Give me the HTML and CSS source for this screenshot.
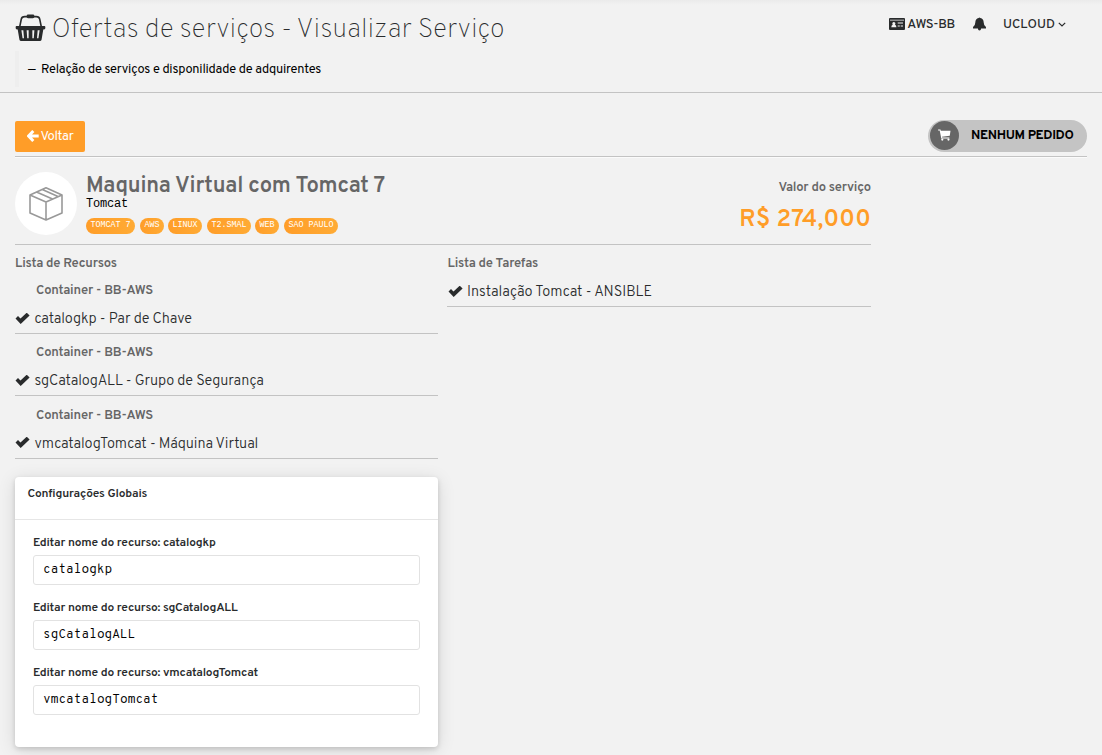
FILE: index.html
```html
<!DOCTYPE html>
<html lang="pt-BR">
<head>
<meta charset="utf-8">
<title>Ofertas de serviços</title>
<link rel="stylesheet" href="styles.css">
</head>
<body>
<svg width="0" height="0" class="defs">
  <symbol id="check" viewBox="0 0 15 11"><path d="M.5 5.6 3 3.1 5.5 5.5 11.7-.3 14.6 2.4 5.7 10.9Z"/></symbol>
</svg>
<header class="page-header">
  <div class="heading">
    <div class="title-row">
      <svg class="basket" viewBox="0 0 32 28"><path d="M5 12 6.5 4.8Q7 2.3 10 2.3H22Q25 2.3 25.5 4.8L27 12" fill="none" stroke="#292b2c" stroke-width="1.7"/><rect x="12" y="0" width="8" height="4" rx="1.5"/><path fill-rule="evenodd" d="M1.5 12H30.5Q31.3 12 31.3 13V14.2Q31.3 15.4 29.2 15.5L27.4 26Q27.2 27.5 25.5 27.5H6.5Q4.8 27.5 4.6 26L2.8 15.5Q.7 15.4.7 14.2V13Q.7 12 1.5 12ZM6.6 16.3 7.8 24.5H9.3L8.6 16.3ZM12 16.3 12.6 24.5H14.1V16.3ZM17.9 16.3V24.5H19.4L20 16.3ZM23.4 16.3 22.7 24.5H24.2L25.4 16.3Z"/></svg>
      <h1 class="title">Ofertas de serviços - Visualizar Serviço</h1>
    </div>
    <p class="subtitle"><span class="dash">—</span><span class="subtitle-text">Relação de serviços e disponilidade de adquirentes</span></p>
  </div>
  <nav class="topnav">
    <span class="nav-item account"><svg class="card-icon" viewBox="0 0 16 12"><path fill-rule="evenodd" d="M1 0H15Q16 0 16 1V11Q16 12 15 12H1Q0 12 0 11V1Q0 0 1 0ZM1 1.7V2.4H15V1.7ZM2.3 9.2H7.4Q7.4 7 5.9 6.8Q6.8 6 6.2 4.7Q4.8 3.2 3.5 4.7Q3 6 3.8 6.8Q2.3 7 2.3 9.2ZM8.7 4.4V5.4H14V4.4ZM8.7 7.5V8.5H10.8V7.5ZM11.7 7.5V8.5H14V7.5Z"/></svg><span class="account-name">AWS-BB</span></span>
    <svg class="bell" viewBox="0 0 12 13"><path d="M5.2.9Q6 0 6.8.9Q9.8 1.5 9.9 5Q10 8.3 12 9.4V10.6H7.5Q7.4 12.4 6 12.5Q4.6 12.4 4.5 10.6H0V9.4Q2 8.3 2.1 5Q2.2 1.5 5.2.9Z"/></svg>
    <span class="nav-item user"><span class="user-name">UCLOUD</span><svg class="chevron" viewBox="0 0 8 5"><path d="M.8.8 4 4 7.2.8"/></svg></span>
  </nav>
</header>
<main class="content">
  <div class="toolbar">
    <button class="back"><svg class="arrow" viewBox="0 0 12 12"><path d="M6.3 1 1.6 6 6.3 11M2.2 6H11.7"/></svg><span class="back-label">Voltar</span></button>
    <div class="cart"><span class="cart-circle"><svg class="cart-icon" viewBox="0 0 14 13"><path d="M0 .5H2.6L3 2H13.5L12.7 7.4 4.2 8.4 4.5 9.2H12.3V10.3H3.5L3.2 8.8 1.8 1.7H0Z"/><circle cx="4.6" cy="11.5" r="1.2"/><circle cx="11.3" cy="11.5" r="1.2"/></svg></span><span class="cart-text">NENHUM PEDIDO</span></div>
  </div>
  <section class="service">
    <div class="summary">
      <div class="avatar"><svg class="box" viewBox="0 0 36 36"><path d="M18 1.7 34 9V27L18 34 2 27V9ZM2 9 18 16 34 9M18 16V34M8.5 6 24.5 13M14.3 3.4 30 10.5"/></svg></div>
      <div class="info">
        <h2 class="name">Maquina Virtual com Tomcat 7</h2>
        <div class="kind">Tomcat</div>
        <div class="tags"><span class="tag t1">TOMCAT 7</span><span class="tag t2">AWS</span><span class="tag t3">LINUX</span><span class="tag t4">T2.SMAL</span><span class="tag t5">WEB</span><span class="tag t6">SAO PAULO</span></div>
      </div>
      <div class="price"><div class="price-label">Valor do serviço</div><div class="amount">R$ 274,000</div></div>
    </div>
    <div class="columns">
      <div class="column">
        <h3 class="list-title resources">Lista de Recursos</h3>
        <div class="resource"><div class="container-name">Container - BB-AWS</div><div class="item"><svg class="check"><use href="#check"/></svg><span class="r1">catalogkp - Par de Chave</span></div></div>
        <div class="resource"><div class="container-name">Container - BB-AWS</div><div class="item"><svg class="check"><use href="#check"/></svg><span class="r2">sgCatalogALL - Grupo de Segurança</span></div></div>
        <div class="resource"><div class="container-name">Container - BB-AWS</div><div class="item"><svg class="check"><use href="#check"/></svg><span class="r3">vmcatalogTomcat - Máquina Virtual</span></div></div>
        <div class="card">
          <div class="card-header">Configurações Globais</div>
          <div class="card-body">
            <label class="field"><span class="label l1">Editar nome do recurso: catalogkp</span><input class="input" value="catalogkp"></label>
            <label class="field"><span class="label l2">Editar nome do recurso: sgCatalogALL</span><input class="input" value="sgCatalogALL"></label>
            <label class="field"><span class="label l3">Editar nome do recurso: vmcatalogTomcat</span><input class="input" value="vmcatalogTomcat"></label>
          </div>
        </div>
      </div>
      <div class="column tasks">
        <h3 class="list-title">Lista de Tarefas</h3>
        <div class="item task"><svg class="check"><use href="#check"/></svg><span class="r4">Instalação Tomcat - ANSIBLE</span></div>
      </div>
    </div>
  </section>
</main>
</body>
</html>
```
FILE: styles.css
```css
* { box-sizing: border-box; }
body { margin: 0; height: 755px; overflow: hidden; background: #f2f2f2 linear-gradient(#ebebeb, #f2f2f2) 0 0 / 100% 5px no-repeat; font-family: Overpass, Roboto, sans-serif; font-size: 13px; color: #292b2c; white-space: nowrap; }
h1, h2, h3, p { margin: 0; }
svg { flex: none; fill: #292b2c; }
.defs { display: block; height: 0; }
.page-header { display: flex; justify-content: space-between; height: 93px; padding: 12px 36px 0 15px; border-bottom: 1px solid #c3c3c3; }
.title-row { display: flex; height: 36px; }
.basket { width: 31px; height: 28px; margin: 2px 6px 0 0; }
.title { padding-top: 2px; margin-left: -.5px; font-size: 27px; line-height: 32px; font-weight: 100; letter-spacing: -.04px; }
.subtitle { display: flex; align-items: center; height: 36px; margin-top: 3px; padding: 2px 0 0 9px; border-left: 4px solid #eeeeee; color: #000; font-size: 12.8px; letter-spacing: -.2px; }
.dash { width: 13px; font-size: 13px; }
.topnav { display: flex; align-items: center; height: 24px; font-size: 13px; font-weight: 500; }
.nav-item { display: flex; align-items: center; }
.account-name { padding-top: 2px; letter-spacing: -.3px; }
.user-name { padding-top: 2px; }
.card-icon { width: 16px; height: 12px; margin-right: 2px; }
.bell { width: 13px; height: 14px; margin: 0 17px 0 18px; }
.chevron { width: 8px; height: 5px; margin-left: 3px; fill: none; stroke: #292b2c; stroke-width: 1.2; }
.content { padding: 27px 15px 0; }
.toolbar { display: flex; justify-content: space-between; height: 37px; border-bottom: 1px solid #c3c3c3; box-shadow: 0 1px #fbfbfb; }
.back { display: flex; align-items: center; width: 70px; height: 31px; margin-top: 1px; padding: 0 0 1px 11.5px; border: 0; border-radius: 2px; background: #ff9d28; color: #fff; font: 13px Overpass, Roboto, sans-serif; }
.back-label { padding-top: 2px; letter-spacing: -.3px; }
.arrow { width: 12px; height: 12px; margin-right: 2px; fill: none; stroke: #fff; stroke-width: 3; }
.cart { display: flex; align-items: center; width: 159px; height: 32px; padding-left: 2px; border-radius: 16px; background: #c4c4c4; color: #000; font-weight: 700; }
.cart-circle { display: flex; align-items: center; justify-content: center; width: 29px; height: 29px; margin: 0 12px 1px 0; border-radius: 50%; background: #666; }
.cart-icon { width: 13px; height: 12px; margin-bottom: 2px; fill: #fff; }
.cart-text { letter-spacing: -.35px; }
.service { width: 856px; }
.summary { display: flex; height: 88px; padding-top: 15px; border-bottom: 1px solid #c3c3c3; }
.avatar { display: flex; align-items: center; justify-content: center; width: 62px; height: 63px; margin-right: 9px; border-radius: 50%; background: #fff; }
.box { width: 36px; height: 36px; fill: none; stroke: #999; stroke-width: 1.6; stroke-linejoin: round; }
.name { height: 26px; padding-top: 3px; font-size: 22px; line-height: 23px; color: #666; font-weight: 600; letter-spacing: -.2px; }
.kind { height: 12px; font: 12px/12px "Courier New", "Liberation Mono", monospace; letter-spacing: -.2px; color: #000; }
.tags { display: flex; margin-top: 8px; gap: 4px; }
.tag { height: 16px; border-radius: 8px; background: linear-gradient(90deg, #ff9d28, #ffab35); color: #fff; font: 8.4px/15px "Courier New", "Liberation Mono", monospace; text-align: center; }
.t1 { width: 49px; margin-right: 1px; } .t2 { width: 24px; } .t3 { width: 34px; margin-right: 1px; } .t4 { width: 44px; } .t5 { width: 24px; margin-right: 1px; } .t6 { width: 54px; }
.price { margin-left: auto; text-align: right; color: #666; font-weight: 600; }
.price-label { height: 29px; line-height: 32px; letter-spacing: -.2px; }
.amount { font-size: 24px; line-height: 38px; color: #ff9d28; letter-spacing: .2px; }
.columns { display: grid; grid-template-columns: 423px 424px; gap: 9px; }
.list-title { height: 33px; padding-top: 11px; font-size: 13px; line-height: 16px; color: #666; font-weight: 600; letter-spacing: -.2px; }
.container-name { height: 27px; padding-left: 21px; line-height: 27px; color: #666; font-weight: 600; letter-spacing: -.18px; }
.item { display: flex; align-items: center; height: 29px; border-bottom: 1px solid #c3c3c3; font-size: 14.5px; font-weight: 300; letter-spacing: -.1px; }
.item span { padding-top: 1px; }
.resource { height: 62.4px; }
.check { width: 15px; height: 11px; margin: 0 4.5px 2px 0; }
.tasks .list-title { padding-left: .5px; }
.task { padding-left: .5px; letter-spacing: 0; }
.card { height: 270px; margin-top: 11.8px; border-radius: 4px; background: #fff; box-shadow: 0 2px 5px rgba(0,0,0,.14), 0 3px 18px rgba(0,0,0,.12); }
.card-header { height: 43px; padding: 9px 12.5px; border-bottom: 1px solid #e6e6e6; font-size: 12px; line-height: 16px; font-weight: 600; letter-spacing: -.18px; }
.card-body { display: flex; flex-direction: column; gap: 14px; padding: 14px 18px; }
.field { display: block; height: 51px; }
.label { display: block; height: 21px; font-size: 12px; line-height: 18px; font-weight: 600; letter-spacing: -.18px; }
.input { display: block; width: 387px; height: 30px; margin: 0; padding: 1px 9px 0; border: 1px solid #e2e2e2; border-radius: 3px; background: #fff; color: #000; font: 12.5px "Overpass Mono", "DejaVu Sans Mono", monospace; }
```
